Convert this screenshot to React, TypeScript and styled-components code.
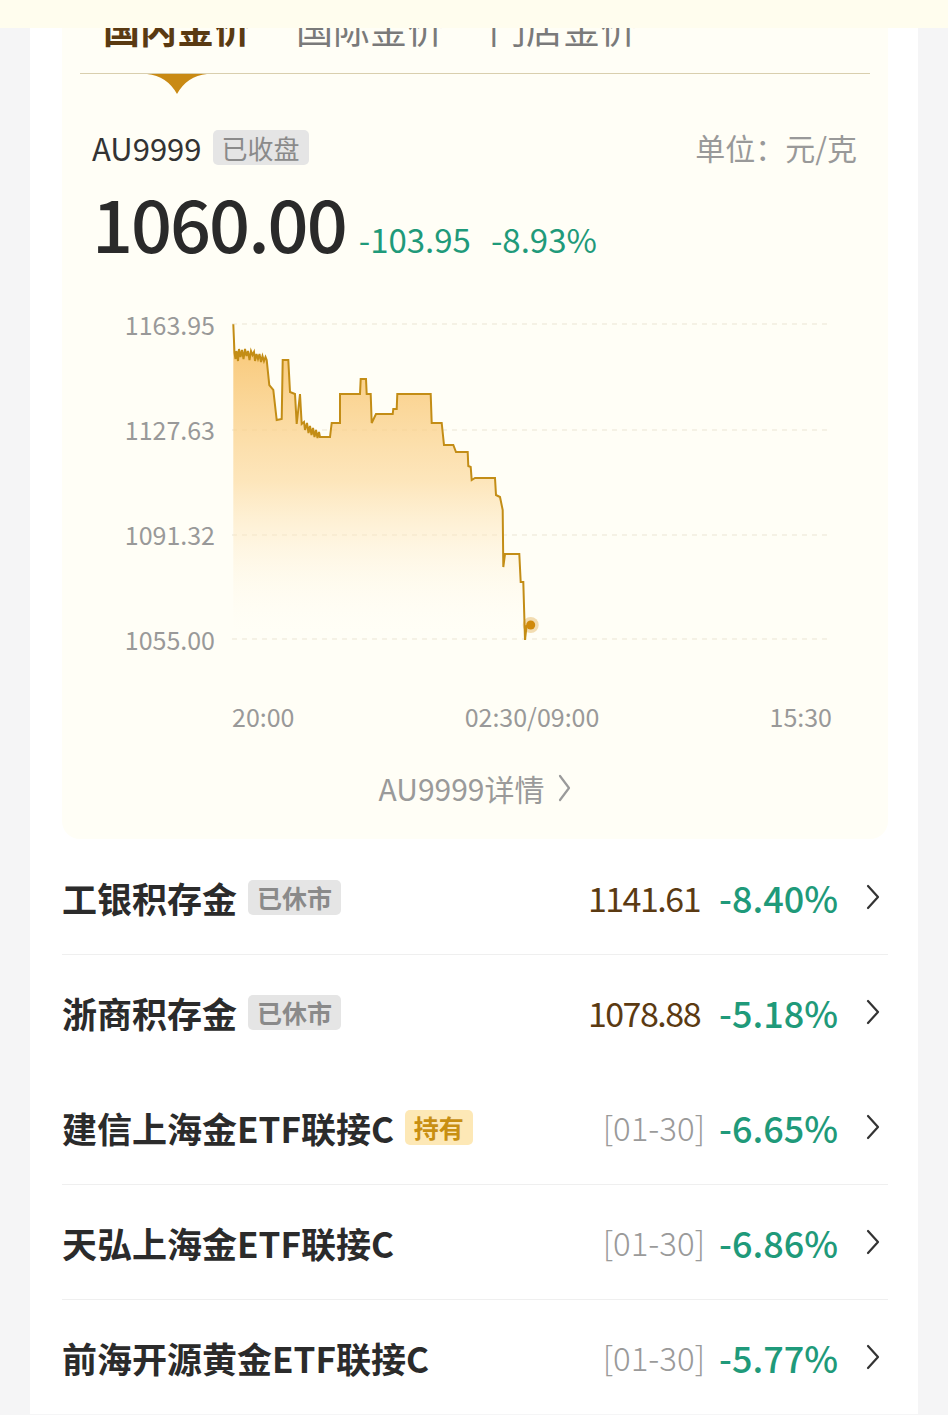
import React from 'react'
import styled, { createGlobalStyle } from 'styled-components'

const GlobalStyle = createGlobalStyle`
  body {
    margin: 0;
    background: #f5f5f6;
    font-family: "Noto Sans CJK SC", "Noto Sans", sans-serif;
  }
`

const FONT = `"Noto Sans CJK SC", "Noto Sans", sans-serif`

const tabs = ['国内金价', '国际金价', '门店金价']

const rows = [
  { name: '工银积存金', tag: '已休市', tone: 'gray', price: '1141.61', pct: '-8.40%' },
  { name: '浙商积存金', tag: '已休市', tone: 'gray', price: '1078.88', pct: '-5.18%', divided: true },
  { name: '建信上海金ETF联接C', tag: '持有', tone: 'gold', date: '[01-30]', pct: '-6.65%' },
  { name: '天弘上海金ETF联接C', date: '[01-30]', pct: '-6.86%', divided: true },
  { name: '前海开源黄金ETF联接C', date: '[01-30]', pct: '-5.77%', divided: true },
]

const yLabels = ['1163.95', '1127.63', '1091.32', '1055.00']
const gridY = [15, 121, 226, 330]

// intraday step line, svg coords
const pts: [number, number][] = [
  [1.3, 15.3], [2.5, 44], [3.5, 50], [4.5, 42], [6, 52], [7, 40], [8.5, 48], [10, 41], [11.5, 50],
  [13, 40], [14.5, 47], [16, 42], [17.5, 51], [19, 42], [20.5, 46], [22, 43], [23, 52], [24.5, 45],
  [26, 50], [27.5, 45], [29, 53], [30.5, 47], [32, 52], [33.5, 48], [34.7, 51], [37.3, 76],
  [41.3, 81], [44.7, 111], [49.7, 110], [50.7, 51], [56.3, 51], [58, 83], [63, 85], [64.7, 115],
  [68, 85], [69.7, 115], [72, 113], [73, 121], [75, 114], [76.5, 124], [78, 117], [79.5, 126],
  [81, 119], [82.5, 128], [84, 121], [85.5, 129], [87, 123], [88, 128], [98, 128], [99.7, 114],
  [108, 114], [108, 85], [128, 85], [128.7, 70], [134, 70], [134.7, 85], [138.7, 85], [139.7, 114],
  [144, 105], [160.7, 105], [161.3, 100], [164.7, 100], [165.3, 85], [198.7, 85], [199.7, 114],
  [209.7, 114], [212, 136], [221.3, 136], [224, 143], [235.7, 143], [236.3, 157], [238.7, 158],
  [239.7, 171], [243, 169], [263, 169], [264, 186], [268, 188], [270.7, 201], [271.3, 258],
  [273, 245], [287.3, 245], [288.7, 273], [291.3, 273], [293, 331], [294.7, 316],
]

const Page = styled.div`
  font-family: ${FONT};
`

const TopBand = styled.div`
  position: fixed;
  top: 0;
  left: 0;
  right: 0;
  height: 28px;
  background: #fffdee;
  z-index: 10;
`

const Card = styled.div`
  margin: 0 30px;
  background: #ffffff;
  padding: 0 30px 0 32px;
`

const Panel = styled.div`
  background: #fffef6;
  border-radius: 0 0 18px 18px;
  padding-bottom: 33px;
`

const TabRow = styled.div`
  display: flex;
  gap: 45px;
  margin: 0 18px;
  padding-left: 23px;
  height: 73px;
  border-bottom: 1px solid #d9cfae;
`

const Tab = styled.div<{ $active?: boolean }>`
  position: relative;
  padding-top: 10px;
  font-size: 37px;
  line-height: 37px;
  font-weight: ${p => (p.$active ? 700 : 400)};
  color: ${p => (p.$active ? '#5a3a12' : '#7a7a7a')};
`

const Pointer = styled.svg`
  position: absolute;
  left: 50%;
  top: 100%;
  margin-left: -30px;
  margin-top: 1px;
`

const InfoRow = styled.div`
  display: flex;
  align-items: center;
  justify-content: space-between;
  margin: 55px 31px 0 30px;
  height: 36px;
`

const Symbol = styled.div`
  display: flex;
  align-items: center;
  gap: 11px;
  font-size: 31px;
  color: #333;
`

const Tag = styled.span<{ $tone?: string; $size?: number }>`
  display: inline-block;
  padding: 0 9px;
  height: 35px;
  line-height: 35px;
  border-radius: 5px;
  font-size: ${p => p.$size ?? 25}px;
  background: ${p => (p.$tone === 'gold' ? '#fde8b6' : '#e5e5e5')};
  color: ${p => (p.$tone === 'gold' ? '#c88f12' : '#8a8a8a')};
`

const Unit = styled.div`
  font-size: 30px;
  color: #999;
`

const PriceRow = styled.div`
  display: flex;
  align-items: baseline;
  gap: 13px;
  margin: 17px 0 0 30px;
  line-height: 80px;
`

const BigPrice = styled.div`
  font-size: 72px;
  font-weight: 500;
  letter-spacing: -2px;
  color: #2a2a2a;
`

const Change = styled.div`
  display: flex;
  gap: 20px;
  font-size: 33px;
  color: #1f9a7a;
`

const ChartRow = styled.div`
  display: flex;
  gap: 17px;
  margin: 30px 0 0 33px;
  height: 345px;
`

const YAxis = styled.div`
  width: 120px;
  display: flex;
  flex-direction: column;
  justify-content: space-between;
  align-items: flex-end;
  font-size: 25px;
  line-height: 30px;
  color: #999;
`

const XAxis = styled.div`
  display: flex;
  justify-content: space-between;
  width: 600px;
  margin: 47px 0 0 170px;
  font-size: 25px;
  line-height: 30px;
  color: #999;
`

const DetailLink = styled.div`
  display: flex;
  align-items: center;
  justify-content: center;
  gap: 14px;
  margin-top: 39px;
  height: 36px;
  font-size: 30px;
  color: #9a9a9a;
`

const Row = styled.div<{ $divided?: boolean }>`
  display: flex;
  align-items: center;
  height: 115px;
  box-sizing: border-box;
  padding-right: 8px;
  border-top: 1px solid ${p => (p.$divided ? '#efefef' : 'transparent')};
`

const Name = styled.div`
  display: flex;
  align-items: center;
  gap: 11px;
  font-size: 35px;
  font-weight: 700;
  color: #2b2b2b;
`

const Right = styled.div`
  margin-left: auto;
  display: flex;
  align-items: center;
  font-size: 36px;
`

const Value = styled.span`
  color: #5b3a12;
  font-size: 34px;
  letter-spacing: -1.5px;
  margin-right: 19px;
`

const DateText = styled.span`
  color: #9a9a9a;
  font-weight: 300;
  font-size: 33px;
  margin-right: 14px;
`

const Pct = styled.span`
  color: #1f9a7a;
  font-weight: 500;
  margin-right: 28px;
`

const Chevron = ({ color = '#333', w = 14, h = 26 }: { color?: string; w?: number; h?: number }) => (
  <svg width={w} height={h} viewBox={`0 0 ${w} ${h}`}>
    <polyline points={`2,2 ${w - 2},${h / 2} 2,${h - 2}`} fill="none" stroke={color} strokeWidth="2.2" strokeLinecap="round" strokeLinejoin="round" />
  </svg>
)

const Chart = () => {
  const line = pts.map((p, i) => `${i ? 'L' : 'M'}${p[0]},${p[1]}`).join(' ')
  const area = `${line} L294.7,330 L1.3,330 Z`
  return (
    <svg width="600" height="345" viewBox="0 0 600 345">
      <defs>
        <linearGradient id="goldFill" x1="0" y1="0" x2="0" y2="1">
          <stop offset="0" stopColor="#f7bd5e" stopOpacity="0.9" />
          <stop offset="0.5" stopColor="#fcd99c" stopOpacity="0.65" />
          <stop offset="1" stopColor="#fffef6" stopOpacity="0" />
        </linearGradient>
      </defs>
      {gridY.map(y => (
        <line key={y} x1="0" x2="598" y1={y} y2={y} stroke="#ebe5d4" strokeWidth="1" strokeDasharray="5 5" />
      ))}
      <path d={area} fill="url(#goldFill)" />
      <path d={line} fill="none" stroke="#c38d16" strokeWidth="2" strokeLinejoin="miter" />
      <circle cx="298.7" cy="316" r="8" fill="#d4900f" fillOpacity="0.3" />
      <circle cx="298.7" cy="316" r="4.5" fill="#d08a0c" />
    </svg>
  )
}

export default function App() {
  return (
    <Page>
      <GlobalStyle />
      <TopBand />
      <Card>
        <Panel>
          <TabRow>
            {tabs.map((t, i) => (
              <Tab key={t} $active={i === 0}>
                {t}
                {i === 0 && (
                  <Pointer width="60" height="20" viewBox="0 0 60 20">
                    <path d="M0,0 H60 Q40,2 30,20 Q20,2 0,0 Z" fill="#c98a14" />
                  </Pointer>
                )}
              </Tab>
            ))}
          </TabRow>
          <InfoRow>
            <Symbol>
              AU9999
              <Tag $size={26}>已收盘</Tag>
            </Symbol>
            <Unit>单位：元/克</Unit>
          </InfoRow>
          <PriceRow>
            <BigPrice>1060.00</BigPrice>
            <Change>
              <span>-103.95</span>
              <span>-8.93%</span>
            </Change>
          </PriceRow>
          <ChartRow>
            <YAxis>
              {yLabels.map(l => (
                <span key={l}>{l}</span>
              ))}
            </YAxis>
            <Chart />
          </ChartRow>
          <XAxis>
            <span>20:00</span>
            <span>02:30/09:00</span>
            <span>15:30</span>
          </XAxis>
          <DetailLink>
            AU9999详情
            <Chevron color="#9a9a9a" w={13} h={28} />
          </DetailLink>
        </Panel>
        {rows.map(r => (
          <Row key={r.name} $divided={r.divided}>
            <Name>
              {r.name}
              {r.tag && <Tag $tone={r.tone}>{r.tag}</Tag>}
            </Name>
            <Right>
              {r.price && <Value>{r.price}</Value>}
              {r.date && <DateText>{r.date}</DateText>}
              <Pct>{r.pct}</Pct>
              <Chevron />
            </Right>
          </Row>
        ))}
      </Card>
    </Page>
  )
}
